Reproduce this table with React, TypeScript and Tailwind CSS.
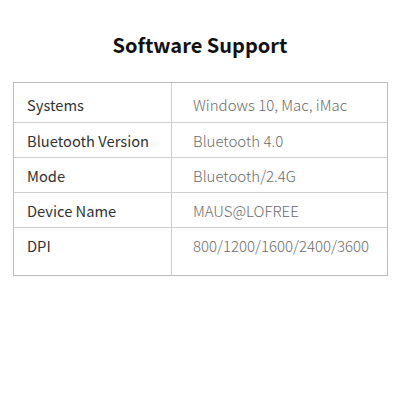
const rows = [
    { label: "Systems", value: "Windows 10, Mac, iMac" },
    { label: "Bluetooth Version", value: "Bluetooth 4.0" },
    { label: "Mode", value: "Bluetooth/2.4G" },
    { label: "Device Name", value: "MAUS@LOFREE" },
    { label: "DPI", value: "800/1200/1600/2400/3600" },
]

export default function App() {
    return (
        <div className="w-[400px] h-[400px] bg-white font-['Noto_Sans_CJK_SC',sans-serif]">
            <h2 className="pt-[31px] text-center text-[20px] leading-[28px] font-bold text-[#111]">Software Support</h2>
            <div className="mt-[23px] mx-[13px] w-[375px] border border-[#bdbdbd]">
                {rows.map((row, i) => {
                    const pad = i === 0 ? "pt-[12px] " : "pt-[8px] "
                    return (
                        <div
                            key={i}
                            className={
                                "flex border-[#cfcfcf] " +
                                (i > 0 ? "border-t " : "") +
                                (i === 0 ? "h-[39px] " : i === 4 ? "h-[48px] " : "h-[35px] ")
                            }
                        >
                            <div className={pad + "w-[158px] pl-[13px] border-r border-[#cfcfcf] text-[14.7px] leading-[20px] text-[#333]"}>
                                {row.label}
                            </div>
                            <div className={pad + "flex-1 pl-[21px] text-[15px] leading-[20px] text-[#6b6b6b] font-light"}>
                                {row.value}
                            </div>
                        </div>
                    )
                })}
            </div>
        </div>
    )
}
